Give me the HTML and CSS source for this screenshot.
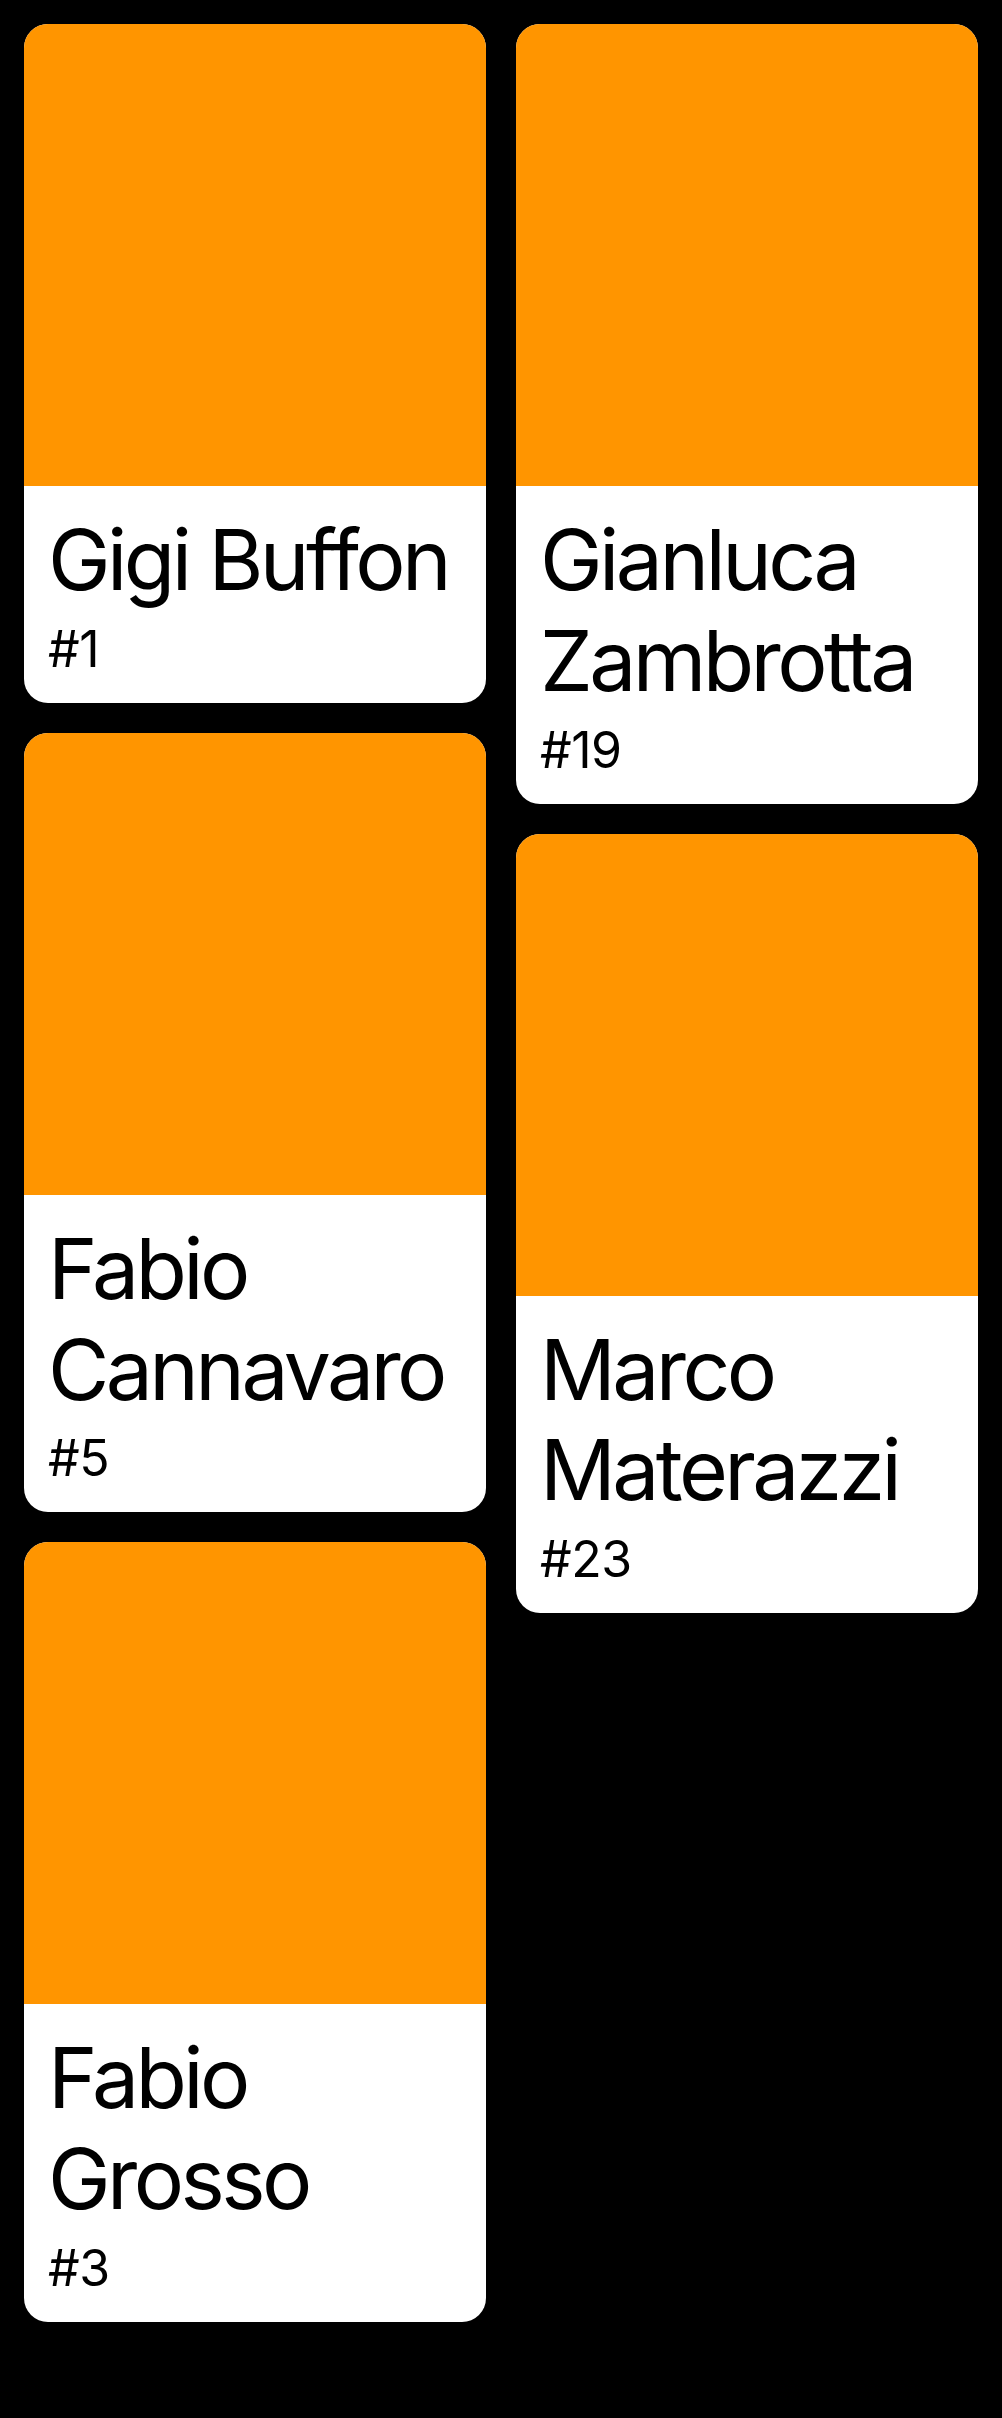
FILE: index.html
```html
<!DOCTYPE html>
<html lang="en">
<head>
<meta charset="utf-8">
<title>Players</title>
<link rel="stylesheet" href="styles.css">
</head>
<body>
<main class="masonry">
  <div class="column">
    <article class="card">
      <div class="photo"></div>
      <div class="info">
        <h2 class="name">Gigi Buffon</h2>
        <p class="number">#1</p>
      </div>
    </article>
    <article class="card">
      <div class="photo"></div>
      <div class="info">
        <h2 class="name">Fabio Cannavaro</h2>
        <p class="number">#5</p>
      </div>
    </article>
    <article class="card">
      <div class="photo"></div>
      <div class="info">
        <h2 class="name">Fabio Grosso</h2>
        <p class="number">#3</p>
      </div>
    </article>
  </div>
  <div class="column">
    <article class="card">
      <div class="photo"></div>
      <div class="info">
        <h2 class="name">Gianluca Zambrotta</h2>
        <p class="number">#19</p>
      </div>
    </article>
    <article class="card">
      <div class="photo"></div>
      <div class="info">
        <h2 class="name">Marco Materazzi</h2>
        <p class="number">#23</p>
      </div>
    </article>
  </div>
</main>
</body>
</html>
```
FILE: styles.css
```css
html, body {
  margin: 0;
  padding: 0;
  background: #000;
}

body {
  font-family: Inter, "Noto Sans", sans-serif;
  color: #000;
}

.masonry {
  display: flex;
  align-items: flex-start;
  gap: 30px;
  padding: 24px;
}

.column {
  flex: 1 1 0;
  min-width: 0;
  display: flex;
  flex-direction: column;
  gap: 30px;
}

.card {
  background: #fff;
  border-radius: 24px;
  overflow: hidden;
}

.photo {
  aspect-ratio: 1 / 1;
  background: #ff9500;
}

.info {
  padding: 24px;
}

.name {
  margin: 0;
  font-size: 84px;
  font-weight: 400;
  line-height: 1.2;
  letter-spacing: -3.6px;
}

.number {
  margin: 8px 0 0;
  font-size: 50px;
  line-height: 1.2;
  letter-spacing: -0.5px;
}
```
